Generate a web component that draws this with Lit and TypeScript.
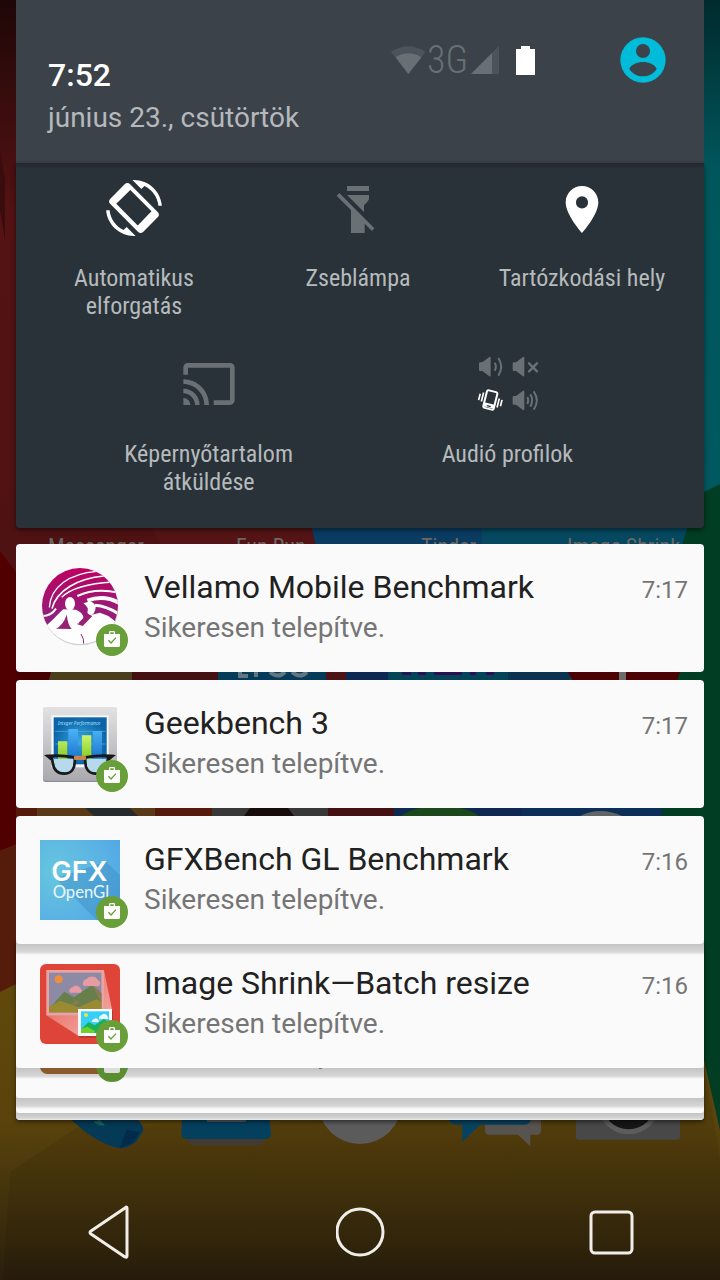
import { LitElement, html, svg, css, nothing, type SVGTemplateResult } from "lit";
import { customElement, property } from "lit/decorators.js";

interface Tile { label: string; on: boolean; box: string; art: SVGTemplateResult; }
interface Note { title: string; text: string; time: string; art: SVGTemplateResult; }

const rotateArt = svg`<path fill-rule="evenodd" d="M10.23 1.75c-.59-.59-1.54-.59-2.12 0L1.75 8.11c-.59.59-.59 1.54 0 2.12l12.02 12.02c.59.59 1.54.59 2.12 0l6.36-6.36c.59-.59.59-1.54 0-2.12zM10.4 4.3l9.1 9.1-5.9 6.1L4.4 10.2z"/><path d="M16.48 2.52c3.27 1.55 5.61 4.72 5.97 8.48h1.5C23.44 4.84 18.29 0 12 0l-.66.03 3.81 3.81zM7.52 21.48C4.25 19.94 1.91 16.76 1.55 13H.05C.56 19.16 5.71 24 12 24l.66-.03-3.81-3.81z"/>`;

const torchArt = svg`<path d="M141 48H207V63H141ZM141 75H207V88Q204 96 192 106V126ZM153 112 194 153V189H153ZM118 69 223 175 216 183 110 77Z"/>`;

const pinArt = svg`<path fill-rule="evenodd" d="M12 2.6C8.13 2.6 5 5.7 5 9.6c0 5.25 7 13.1 7 13.1s7-7.85 7-13.1c0-3.9-3.13-7-7-7zm0 9.600a2.600 2.600 0 1 1 0-5.200 2.600 2.600 0 0 1 0 5.200z"/>`;

const castArt = svg`<path d="M21 3H3c-1.1 0-2 .9-2 2v3h2V5h18v14h-7v2h7c1.1 0 2-.9 2-2V5c0-1.1-.9-2-2-2zM1 18v3h3c0-1.66-1.34-3-3-3zm0-4v2c2.76 0 5 2.24 5 5h2c0-3.87-3.13-7-7-7zm0-4v2c4.97 0 9 4.03 9 9h2c0-6.08-4.93-11-11-11z"/>`;

const speaker = svg`<path d="M0 19Q0 16 3 16H10L31 0Q35-2 35 3V55Q35 60 31 58L10 42H3Q0 42 0 39Z"/>`;
const audioArt = svg`
  <g transform="translate(147 52)">${speaker}<path d="M47 17Q54 29 47 41M58 3Q75 29 58 56" fill="none" stroke="currentColor" stroke-width="6"/></g>
  <g transform="translate(248 52)">${speaker}<path d="M49 19 73 43M73 19 49 43" stroke="currentColor" stroke-width="7" stroke-linecap="round"/></g>
  <g transform="translate(248 153)">${speaker}<path d="M44 19Q50 29 44 40M53 11Q64 29 53 48M63 2Q82 29 63 57" fill="none" stroke="currentColor" stroke-width="6"/></g>
  <g fill="none" stroke="#fff" transform="rotate(14 181 181)">
    <rect x="165" y="154" width="32" height="54" rx="5" stroke-width="6"/>
    <path d="M165 198H197" stroke-width="12"/><path d="M175 200H187" stroke="#283238" stroke-width="4"/>
    <path d="M156 164V192M147 170V190M206 170V198M215 172V192" stroke-width="5"/>
  </g>`;

const tiles: Tile[][] = [
  [
    { label: "Automatikus elforgatás", on: true, box: "0 0 24 24", art: rotateArt },
    { label: "Zseblámpa", on: false, box: "90 30 168 168", art: torchArt },
    { label: "Tartózkodási hely", on: true, box: "0 0 24 24", art: pinArt },
  ],
  [
    { label: "Képernyőtartalom átküldése", on: false, box: "0 0 24 24", art: castArt },
    { label: "Audió profilok", on: false, box: "147 49 168 168", art: audioArt },
  ],
];

const vellamoArt = svg`
  <defs>
    <clipPath id="disc"><circle cx="240" cy="288" r="114"/></clipPath>
    <linearGradient id="plum" x1="0" y1="0" x2="0" y2="1"><stop offset="0" stop-color="#be0060"/><stop offset="1" stop-color="#8b2580"/></linearGradient>
  </defs>
  <circle cx="241" cy="292" r="114" fill="#d2d2d2"/>
  <g clip-path="url(#disc)">
    <rect x="120" y="170" width="240" height="236" fill="#fff"/>
    <path d="M120 170H360V345L325 318 300 308 270 316 240 345 215 320 196 315 170 325 140 348 120 340Z" fill="url(#plum)"/>
    <g fill="none" stroke="#fff">
      <path d="M148 292C152 230 210 190 290 184" stroke-width="4"/>
      <path d="M156 296C170 240 235 205 312 198" stroke-width="5"/>
      <path d="M185 262C215 232 270 220 338 216" stroke-width="4"/>
      <path d="M232 258C270 240 310 238 356 248" stroke-width="6"/>
      <path d="M262 272C300 258 330 264 356 278" stroke-width="12"/>
      <path d="M284 286C310 288 335 298 356 312" stroke-width="9"/>
      <path d="M128 318C145 318 160 308 168 296" stroke-width="6"/>
    </g>
    <ellipse cx="210" cy="281" rx="15" ry="20" fill="#fff"/>
    <path d="M120 362C150 340 168 318 190 298L228 299Q250 308 250 324L236 338 256 348 292 312 352 345V410H120Z" fill="#fff"/>
    <path d="M250 280Q282 266 287 292Q286 312 270 318L262 308Q268 292 250 280Z" fill="#fff"/>
    <path d="M200 314Q204 345 215 357L168 356Q190 345 200 314ZM264 312 277 318 260 336 248 348 230 342 248 336 252 322Z" fill="#952273"/>
    <path d="M243 372Q253 385 251 408" fill="none" stroke="#952273" stroke-width="3"/>
  </g>`;

const geekArt = svg`
  <defs>
    <linearGradient id="plate" x1="0" y1="0" x2="0" y2="1"><stop offset="0" stop-color="#e2e2e4"/><stop offset="1" stop-color="#a9a9ae"/></linearGradient>
    <radialGradient id="screen"><stop offset="0" stop-color="#38a9df"/><stop offset="1" stop-color="#0c64a8"/></radialGradient>
    <linearGradient id="lime" x1="0" y1="0" x2="0" y2="1"><stop offset="0" stop-color="#c8f56a"/><stop offset="1" stop-color="#85c925"/></linearGradient>
    <linearGradient id="sky" x1="0" y1="0" x2="0" y2="1"><stop offset="0" stop-color="#4cb4f5"/><stop offset="1" stop-color="#1a72d0"/></linearGradient>
  </defs>
  <rect x="129" y="84" width="222" height="222" rx="8" fill="#8d8d92"/>
  <rect x="129" y="81" width="222" height="221" rx="8" fill="url(#plate)"/>
  <rect x="154" y="106" width="172" height="156" fill="#f7f7f7"/>
  <rect x="161" y="112" width="159" height="141" fill="url(#screen)"/>
  <path d="M166 154H316M166 192H316" stroke="#5cb5e2" stroke-width="2"/>
  <text x="173" y="134" font-family="Noto Sans, sans-serif" font-style="italic" font-size="14" fill="#a4def8">Integer Performance</text>
  <path d="M174 184H202V238H174ZM246 166H274V238H246Z" fill="url(#lime)"/>
  <path d="M205 147H234V238H205ZM278 153H306V238H278Z" fill="url(#sky)"/>
  <path d="M160 236H222Q222 278 194 280 164 280 160 236ZM258 236H322Q318 278 290 280 260 278 258 236Z" fill="#b6daec"/>
  <path d="M142 228Q180 224 224 232Q228 280 194 281 160 282 157 240ZM338 228Q300 224 256 232Q252 280 286 281 320 282 323 240Z" fill="none" stroke="#17191b" stroke-width="8"/>
  <path d="M139 224 165 225 158 240 148 238ZM341 224 315 225 322 240 332 238Z" fill="#17191b"/>
  <rect x="222" y="227" width="36" height="13" rx="4" fill="#c9864c"/>`;

const gfxArt = svg`
  <defs><radialGradient id="aqua" cx=".2" cy=".4" r=".9"><stop offset="0" stop-color="#68c6df"/><stop offset="1" stop-color="#52a8e6"/></radialGradient></defs>
  <rect x="120" y="480" width="240" height="240" fill="url(#aqua)"/>
  <path d="M165 595 318 545 360 585V720H290Z" fill="#3c8cc4" opacity=".45"/>
  <text x="154" y="602" font-family="Inter, sans-serif" font-weight="600" font-size="82" fill="#fff">GFX</text>
  <text x="158" y="655" font-family="Lato, sans-serif" font-weight="400" font-size="50" fill="#eaf6fc">OpenGl</text>`;

const shrinkArt = svg`
  <defs><linearGradient id="beam" x1="0" y1="0" x2="1" y2="1"><stop offset="0" stop-color="#e2574c"/><stop offset="1" stop-color="#f6b5b0"/></linearGradient></defs>
  <rect x="120" y="72" width="240" height="240" rx="18" fill="#de4538"/>
  <path d="M139 226 312 91 336 208V288H236Z" fill="url(#beam)"/>
  <rect x="139" y="90" width="173" height="136" fill="#e9a3a2"/>
  <rect x="147" y="98" width="157" height="119" fill="#8d8aa5"/>
  <circle cx="176" cy="118" r="12" fill="#f08c3b"/>
  <path d="M147 206 193 155 222 172 276 134 304 160V217H147Z" fill="#697f4b"/>
  <path d="M193 155 240 188 200 205 230 180ZM276 134 304 160V190Z" fill="#8a7b52"/>
  <path d="M147 200 180 182 236 202 290 178 304 186V217H147Z" fill="#9a8b32"/>
  <path d="M210 158a10 10 0 0 1 8-16 14 14 0 0 1 24 4 8 8 0 0 1 0 12ZM250 137a14 14 0 0 1 10-20 20 20 0 0 1 34 4 10 10 0 0 1 2 18Z" fill="#e79ba3"/>
  <rect x="237" y="211" width="102" height="82" fill="#8d2a22" opacity=".5"/>
  <rect x="234" y="207" width="102" height="81" fill="#f5fbfb"/>
  <rect x="243" y="214" width="84" height="65" fill="#35cff8"/>
  <circle cx="258" cy="225" r="6" fill="#f5e43c"/>
  <path d="M276 246a6 6 0 0 1 6-8 8 8 0 0 1 14 4v5ZM298 238a8 8 0 0 1 6-12 10 10 0 0 1 18 2l4 9Z" fill="#e9f7fd"/>
  <path d="M243 268 266 246 284 256 312 236 327 248V279H243Z" fill="#17b25b"/>
  <path d="M243 266 262 260 284 272V279H243Z" fill="#6fd02c"/>`;

const notes: Note[] = [
  { title: "Vellamo Mobile Benchmark", text: "Sikeresen telepítve.", time: "7:17", art: svg`<g transform="translate(-120 -174)">${vellamoArt}</g>` },
  { title: "Geekbench 3", text: "Sikeresen telepítve.", time: "7:17", art: svg`<g transform="translate(-120 -72)">${geekArt}</g>` },
  { title: "GFXBench GL Benchmark", text: "Sikeresen telepítve.", time: "7:16", art: svg`<g transform="translate(-120 -480)">${gfxArt}</g>` },
  { title: "Image Shrink—Batch resize", text: "Sikeresen telepítve.", time: "7:16", art: svg`<g transform="translate(-120 -72)">${shrinkArt}</g>` },
];

const badge = svg`
  <circle cx="216" cy="216" r="48" fill="#689f38"/>
  <path fill-rule="evenodd" d="M207 198V193Q207 189 211 189H221Q225 189 225 193V198H240V233Q240 237 236 237H196Q192 237 192 233V198ZM211 198H221V193H211Z" fill="#fff"/>
  <path d="M205 217 213 225 228 209" fill="none" stroke="#689f38" stroke-width="4"/>`;

@customElement("wall-paper")
class WallPaper extends LitElement {
  static styles = css`
    :host { display: block; }
    .art { display: block; width: 100%; height: 100%; }
    .caption { font: 400 22px "Roboto Condensed", Roboto, sans-serif; fill: #6c6766; }
  `;
  render() {
    return html`<svg class="art" viewBox="0 0 720 1280" preserveAspectRatio="xMidYMin slice" aria-hidden="true">
      <defs>
        <linearGradient id="red" x1="0" y1="0" x2="0" y2="1"><stop offset="0" stop-color="#1f0707"/><stop offset=".35" stop-color="#541214"/><stop offset="1" stop-color="#4e1213"/></linearGradient>
        <linearGradient id="teal" x1="0" y1="0" x2="0" y2="1"><stop offset="0" stop-color="#002a2d"/><stop offset=".3" stop-color="#00565b"/><stop offset="1" stop-color="#005a61"/></linearGradient>
        <linearGradient id="olive" gradientUnits="userSpaceOnUse" x1="0" y1="990" x2="0" y2="1280"><stop offset="0" stop-color="#60490b"/><stop offset=".45" stop-color="#5a430c"/><stop offset=".75" stop-color="#40300c"/><stop offset="1" stop-color="#291e0b"/></linearGradient>
      </defs>
      <rect width="720" height="1280" fill="url(#olive)"/>
      <rect width="400" height="600" fill="url(#red)"/>
      <path d="M0 150 5 180V240L0 210Z" fill="#3a0c0d"/>
      <rect x="360" width="360" height="560" fill="url(#teal)"/>
      <path d="M152 528H312L340 700H250Z" fill="#541415"/>
      <path d="M312 528H482V700H345Z" fill="#0a3c62"/>
      <path d="M482 528H687L670 700H482Z" fill="#05485f"/>
      <path d="M720 484 704 492 687 528 640 700V1000L704 1060 720 1130Z" fill="#013d22"/>
      <path d="M0 551 16 572V845L0 851Z" fill="#500000"/>
      <rect x="16" y="668" width="202" height="16" fill="#470000"/>
      <path d="M52 668H132V684H48Z" fill="#4a3e1c"/>
      <rect x="132" y="668" width="86" height="16" fill="#451011"/>
      <rect x="218" y="668" width="108" height="16" fill="#053c59"/>
      <path d="M240 672V676H248M256 672V677M270 672Q278 679 285 672M292 672Q300 679 307 672" fill="none" stroke="#62767f" stroke-width="4"/>
      <rect x="326" y="668" width="20" height="16" fill="#4d1415"/>
      <rect x="346" y="668" width="42" height="16" fill="#0d2953"/>
      <rect x="388" y="668" width="120" height="16" fill="#044458"/>
      <path d="M402 672H411V675H402ZM418 672H426V675H418ZM434 672H462V675H434ZM470 672H476V675H470ZM486 672H494V675H486Z" fill="#2c0f52"/>
      <rect x="508" y="668" width="62" height="16" fill="#0a3352"/>
      <path d="M568 672H680L676 684H574Z" fill="#4c0202"/><rect x="619" y="668" width="7" height="16" fill="#6c6c6c"/>
      <rect x="16" y="804" width="196" height="16" fill="#551a0b"/>
      <rect x="37" y="804" width="118" height="16" fill="#5a3a16"/><path d="M85 808 94 816H138L130 808Z" fill="#262a2c"/>
      <rect x="212" y="804" width="116" height="16" fill="#383838"/><path d="M250 808H288L294 816H244Z" fill="#170b0b"/>
      <rect x="328" y="804" width="68" height="16" fill="#441012"/>
      <rect x="394" y="804" width="130" height="16" fill="#0e2853"/><ellipse cx="440" cy="822" rx="42" ry="16" fill="#1b481a"/>
      <rect x="522" y="804" width="140" height="16" fill="#0b2f58"/><path d="M580 816Q600 806 622 816Z" fill="#606568"/>
      <path d="M0 851 16 844V984L0 992Z" fill="#561c0b"/>
      <path d="M76 1128 10 1172 3 1280H720V1160L704 1062V1110Z" fill="#000" opacity=".07"/>
      <text class="caption" x="48" y="554">Messenger</text>
      <text class="caption" x="236" y="554">Fun Run</text>
      <text class="caption" x="421" y="554">Tinder</text>
      <text class="caption" x="567" y="554">Image Shrink</text>
      <g transform="translate(0 940) scale(.3333)">
        <path d="M215 540H412Q436 560 428 575L408 606Q380 626 360 625 290 612 215 540Z" fill="#043a55"/>
        <path d="M380 570 420 575 398 608 360 624Q372 590 380 570Z" fill="#022a4a"/><path d="M280 545Q300 560 315 556L300 540Z" fill="#176066"/>
        <path d="M560 590H796L788 610Q785 615 775 615H580Q568 614 560 590Z" fill="#413b35"/>
        <path d="M547 530H808L813 582Q812 597 798 597H560Q545 596 544 582Z" fill="#043f5e"/><rect x="620" y="530" width="118" height="16" rx="4" fill="#555b60"/>
        <circle cx="1080" cy="486" r="126" fill="#5b5b5b"/>
      </g>
      <g transform="translate(360 940) scale(.3333)">
        <path d="M375 530H543V572Q542 584 530 584H511V619L474 584H388Q376 584 375 572Z" fill="#57544f"/>
        <path d="M260 530H514Q512 554 494 554H361L307 606V554H285Q270 552 260 530Z" fill="#074361"/>
        <rect x="648" y="520" width="312" height="79" rx="8" fill="#484848"/>
        <circle cx="806" cy="488" r="95" fill="#5c5c5c"/><circle cx="806" cy="488" r="80" fill="#161616"/>
      </g>
    </svg>`;
  }
}

@customElement("status-header")
class StatusHeader extends LitElement {
  static styles = css`
    :host { display: flex; align-items: flex-start; padding: 37px 38px 24px 32px; background: #3b4249; }
    .when { flex: 1; padding-top: 18px; }
    .time { font-size: 32px; font-weight: 500; line-height: 40px; color: #fff; }
    .date { padding-top: 2px; font-size: 28px; line-height: 42px; color: #b6b9bc; white-space: nowrap; }
    .signals { display: flex; align-items: center; margin: 4px 85px 0 0; height: 38px; color: #686f75; }
    .net { font: 300 38px/38px "Roboto Condensed", "Open Sans Condensed", Roboto, sans-serif; padding-left: 1px; }
    .signal { margin-left: 3px; }
    .battery { margin-left: 17px; }
    .user { display: block; border: 0; padding: 0; background: none; height: 46px; }
    svg { display: block; }
  `;
  render() {
    return html`
      <div class="when">
        <div class="time">7:52</div>
        <div class="date">június 23., csütörtök</div>
      </div>
      <div class="signals">
        <svg width="35" height="28" viewBox="0 0 105 84" aria-hidden="true"><path d="M0 17Q52-16 104 17L52 84Z" fill="#4c535a"/><path d="M14 34Q52 10 91 34L52 84Z" fill="currentColor"/></svg>
        <span class="net">3G</span>
        <svg class="signal" width="28" height="28" viewBox="0 0 84 84" aria-hidden="true"><path d="M84 0V84H0Z" fill="#4c535a"/><path d="M63 21V84H0Z" fill="currentColor"/></svg>
        <svg class="battery" width="19" height="29" viewBox="0 0 19 29" aria-hidden="true"><path d="M5 0H14V3H19V29H0V3H5Z" fill="#fff"/></svg>
      </div>
      <button class="user" type="button" aria-label="Felhasználó">
        <svg width="46" height="46" viewBox="0 0 138 138" aria-hidden="true"><circle cx="69" cy="69" r="68" fill="#00bcd9"/><circle cx="69" cy="42" r="21" fill="#3b4249"/><path d="M28 95C34 82 52 75 69 75S104 82 110 95C102 110 86 118 69 118S36 110 28 95Z" fill="#3b4249"/></svg>
      </button>`;
  }
}

@customElement("quick-tiles")
class QuickTiles extends LitElement {
  static styles = css`
    :host { display: block; padding: 0 10px 13px 6px; background: linear-gradient(#20282d, #283238 6px); border-radius: 0 0 4px 4px; box-shadow: 0 2px 5px rgba(0, 0, 0, 0.5); }
    .row { display: flex; justify-content: space-evenly; }
    .tile { box-sizing: border-box; width: 33.333%; min-height: 176px; display: flex; flex-direction: column; align-items: center; justify-content: flex-start; gap: 28px; border: 0; padding: 17px 12px 19px; background: none; color: #697175; }
    .tile.on { color: #fff; }
    .icon { display: block; width: 56px; height: 56px; overflow: visible; fill: currentColor; }
    .label { max-width: 184px; font: 400 24px/28px "Roboto Condensed", Roboto, sans-serif; color: #b6babc; }
  `;
  render() {
    return tiles.map((row) => html`<div class="row">${row.map((t) => html`
      <button class="tile ${t.on ? "on" : ""}" type="button">
        <svg class="icon" viewBox=${t.box} aria-hidden="true">${t.art}</svg>
        <span class="label">${t.label}</span>
      </button>`)}</div>`);
  }
}

@customElement("note-card")
class NoteCard extends LitElement {
  @property({ attribute: false }) note?: Note;
  static styles = css`
    :host { display: block; border-radius: 4px; background: #fafafa; }
    .card { display: flex; gap: 16px; padding: 24px 16px 16px 24px; }
    .icon { display: block; flex: none; width: 88px; height: 88px; }
    .body { flex: 1; min-width: 0; }
    .head { display: flex; justify-content: space-between; align-items: baseline; height: 40px; }
    .title { margin: 0; font-size: 32px; font-weight: 400; line-height: 38px; color: #212121; white-space: nowrap; }
    .time { font-size: 24px; line-height: 38px; color: #757575; }
    .text { margin: 0; font-size: 28px; line-height: 40px; color: #757575; }
  `;
  render() {
    const n = this.note;
    if (!n) return nothing;
    return html`<article class="card">
      <svg class="icon" viewBox="0 0 264 264" aria-hidden="true">${n.art}${badge}</svg>
      <div class="body">
        <div class="head"><h2 class="title">${n.title}</h2><time class="time">${n.time}</time></div>
        <p class="text">${n.text}</p>
      </div>
    </article>`;
  }
}

@customElement("app-root")
class AppRoot extends LitElement {
  static styles = css`
    :host { position: relative; display: flex; flex-direction: column; min-height: 100vh; overflow: hidden; background: #291e0b; font-family: Roboto, sans-serif; }
    .wall { position: absolute; inset: 0; }
    .shade { position: relative; padding: 0 16px; }
    .list { position: relative; z-index: 1; display: flex; flex-direction: column; gap: 8px; margin-top: 16px; }
    .pile { display: flex; flex-direction: column; margin-top: -4px; border-radius: 4px; background: #dcdcdc; box-shadow: 0 2px 4px rgba(0, 0, 0, 0.5); }
    .under { border-radius: 0 0 4px 4px; background: linear-gradient(#c4c4c4, #d6d6d6 8px, #fafafa 11px); }
    .tucked { background: linear-gradient(#c4c4c4 4px, #d8d8d8 12px, #fafafa 15px); }
    .third { height: 30px; }
    .fourth { height: 15px; }
    .fifth { height: 7px; background: linear-gradient(#c4c4c4, #d4d4d4 5px, #ececec 7px); }
    .rest { display: block; margin-left: 24px; }
    .nav { position: relative; display: flex; justify-content: space-between; align-items: center; margin-top: auto; height: 96px; padding: 0 83px 0 85px; }
    .key { border: 0; padding: 0; background: none; }
    .key svg { display: block; fill: none; stroke: #f1eeea; stroke-width: 3; stroke-linejoin: round; }
  `;
  render() {
    return html`
      <wall-paper class="wall"></wall-paper>
      <main class="shade">
        <status-header></status-header>
        <quick-tiles></quick-tiles>
        <section class="list">${notes.slice(0, 3).map((n) => html`<note-card .note=${n}></note-card>`)}</section>
        <section class="pile">
          <note-card class="tucked" .note=${notes[3]}></note-card>
          <div class="under third">
            <svg class="rest" width="290" height="14" viewBox="0 0 290 14" aria-hidden="true">
              <path d="M0 0H80Q78 6 72 6H8Q2 6 0 0Z" fill="#8a5a2c"/>
              <path d="M56 0H88Q84 14 72 14T56 0Z" fill="#5b8d31"/><path d="M64 0H80V3Q80 5 78 5H66Q64 5 64 3Z" fill="#dcdcdc"/>
              <rect x="279" width="3" height="1" fill="#757575"/>
            </svg>
          </div>
          <div class="under fourth"></div>
          <div class="under fifth"></div>
        </section>
      </main>
      <nav class="nav">
        <button class="key" type="button" aria-label="Vissza"><svg width="50" height="54" viewBox="0 0 50 54"><path d="M42 3V51Q42 53 40 52L6 29Q4 27.500 6 26L40 3Q42 1 42 3Z"/></svg></button>
        <button class="key" type="button" aria-label="Kezdőképernyő"><svg width="50" height="50" viewBox="0 0 50 50"><circle cx="24" cy="25" r="23"/></svg></button>
        <button class="key" type="button" aria-label="Áttekintés"><svg width="50" height="50" viewBox="0 0 50 50"><rect x="4" y="5" width="41" height="41" rx="4"/></svg></button>
      </nav>`;
  }
}
